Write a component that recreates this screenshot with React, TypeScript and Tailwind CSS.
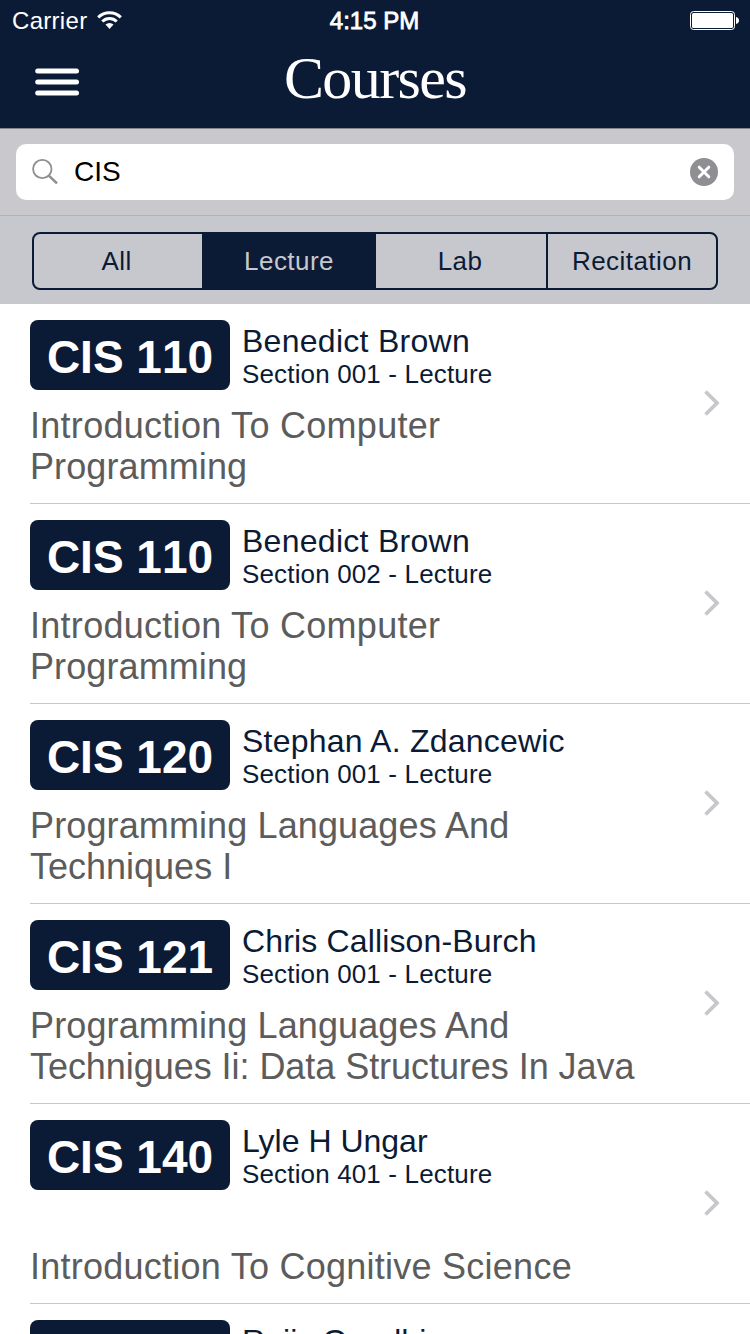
type Line = { text: string; tracking: string };
type Course = { code: string; instructor: string; nameTracking: string; section: string; title: Line[] };

const introLines: Line[] = [
  { text: "Introduction To Computer", tracking: "tracking-[0.28px]" },
  { text: "Programming", tracking: "tracking-[0.1px]" },
];

const courses: Course[] = [
  { code: "CIS 110", instructor: "Benedict Brown", nameTracking: "tracking-[0.28px]", section: "Section 001 - Lecture", title: introLines },
  { code: "CIS 110", instructor: "Benedict Brown", nameTracking: "tracking-[0.28px]", section: "Section 002 - Lecture", title: introLines },
  {
    code: "CIS 120",
    instructor: "Stephan A. Zdancewic",
    nameTracking: "tracking-[0.22px]",
    section: "Section 001 - Lecture",
    title: [
      { text: "Programming Languages And", tracking: "tracking-[0.12px]" },
      { text: "Techniques I", tracking: "tracking-[0px]" },
    ],
  },
  {
    code: "CIS 121",
    instructor: "Chris Callison-Burch",
    nameTracking: "tracking-[0.15px]",
    section: "Section 001 - Lecture",
    title: [
      { text: "Programming Languages And", tracking: "tracking-[0.12px]" },
      { text: "Technigues Ii: Data Structures In Java", tracking: "tracking-[-0.05px]" },
    ],
  },
  {
    code: "CIS 140",
    instructor: "Lyle H Ungar",
    nameTracking: "tracking-[0px]",
    section: "Section 401 - Lecture",
    title: [{ text: "Introduction To Cognitive Science", tracking: "tracking-[0.25px]" }],
  },
  {
    code: "CIS 160",
    instructor: "Rajiv Gandhi",
    nameTracking: "tracking-[0.1px]",
    section: "Section 001 - Lecture",
    title: [{ text: "Mathematical Foundations", tracking: "tracking-[0px]" }],
  },
];

function StatusBar() {
  return (
    <div className="grid h-10 grid-cols-3 items-center pl-3 pr-[11px] text-[24px] leading-[42px]">
      <div className="flex items-center gap-[10px]">
        <span className="h-10 tracking-[0.3px]">Carrier</span>
        <svg width="25" height="18" viewBox="0 0 25 18" fill="none" stroke="white" strokeWidth="3">
          <path d="M1.2 6.4A16 16 0 0 1 23.8 6.4" />
          <path d="M5.3 10.5A10.2 10.2 0 0 1 19.7 10.5" />
          <path d="M12.5 17.9L8.5 13.6A5.7 5.7 0 0 1 16.5 13.6Z" fill="white" stroke="none" />
        </svg>
      </div>
      <span className="h-10 pr-0.5 text-center [-webkit-text-stroke:0.8px_white]">4:15 PM</span>
      <svg className="justify-self-end" width="49" height="19" viewBox="0 0 49 19">
        <rect x="0.5" y="0.5" width="44" height="18" rx="3" fill="none" stroke="white" />
        <rect x="2" y="2" width="41" height="15" rx="1.5" fill="white" />
        <path d="M46 6C48 6.5 49 7.8 49 9.5S48 12.5 46 13Z" fill="white" />
      </svg>
    </div>
  );
}

function NavBar() {
  return (
    <div className="grid h-[88px] grid-cols-[80px_1fr_80px]">
      <svg className="ml-[35px] mt-7" width="44" height="28" viewBox="0 0 44 28" fill="white">
        <rect x="0.2" y="0.4" width="43.8" height="5.1" rx="2.5" />
        <rect x="0.2" y="11.4" width="43.8" height="5.1" rx="2.5" />
        <rect x="0.2" y="22.4" width="43.8" height="5.1" rx="2.5" />
      </svg>
      <h1 className="text-center font-['Liberation_Serif',serif] text-[60px] leading-[77px] tracking-[-1.6px]">Courses</h1>
    </div>
  );
}

function SearchBar() {
  return (
    <div className="h-[88px] border-y border-t-[#85868b] border-b-[#b2b2b6] bg-[#c9c8cd] px-4 pt-[15px]">
      <div className="flex h-14 items-center rounded-[10px] bg-white px-4">
        <svg width="27" height="28" viewBox="0 0 27 28" fill="none" stroke="#8e8e93">
          <circle cx="10.3" cy="11" r="9.2" strokeWidth="1.8" />
          <path d="M16.8 17.6L25 25.4" strokeWidth="2.6" />
        </svg>
        <span className="h-14 flex-1 pl-[15px] text-[28px] leading-[55px] text-black">CIS</span>
        <svg width="28" height="28" viewBox="0 0 28 28">
          <circle cx="14" cy="14" r="14" fill="#8e8e93" />
          <path d="M9.2 9.2L18.8 18.8M18.8 9.2L9.2 18.8" stroke="white" strokeWidth="3" strokeLinecap="round" />
        </svg>
      </div>
    </div>
  );
}

function Scopes() {
  return (
    <div className="h-[88px] bg-[#c7c8cd] px-8 pt-4">
      <div className="grid h-[58px] w-[686px] grid-cols-[168px_174px_170px_170px] overflow-hidden rounded-lg border-2 border-[#0b1b35] text-center text-[26px] leading-[54px] tracking-[0.45px] text-[#0b1b35]">
        <span className="pr-[3px]">All</span>
        <span className="bg-[#0b1b35] text-[#c7c8cd]">Lecture</span>
        <span className="pr-0.5">Lab</span>
        <span className="border-l-2 border-[#0b1b35]">Recitation</span>
      </div>
    </div>
  );
}

function CourseRow({ course }: { course: Course }) {
  return (
    <li className="ml-[30px] flex h-[200px] items-center border-b border-[#c8c7cc]">
      <div className="flex h-full w-[640px] flex-col justify-between py-4">
        <div className="flex gap-3">
          <div className="h-[70px] w-[200px] rounded-lg bg-[#0b1b35] text-center text-[46px] font-bold leading-[74px] text-white [font-kerning:none]">
            {course.code}
          </div>
          <div className="whitespace-nowrap pt-[3px] text-[#0b1b35]">
            <div className={`text-[32px] leading-9 ${course.nameTracking}`}>{course.instructor}</div>
            <div className="text-[26px] leading-[30px] tracking-[0.15px]">{course.section}</div>
          </div>
        </div>
        <div className="whitespace-nowrap text-[36px] leading-[41px] text-[#5c5c5c]">
          {course.title.map((line) => (
            <div key={line.text} className={line.tracking}>
              {line.text}
            </div>
          ))}
        </div>
      </div>
      <svg className="mb-[2px] ml-[34px]" width="17" height="28" viewBox="0 0 17 28" fill="none">
        <path d="M1.5 2.5L13 14L1.5 25.5" stroke="#c7c7cc" strokeWidth="3.8" />
      </svg>
    </li>
  );
}

export default function App() {
  return (
    <div className="h-[1334px] w-[750px] overflow-hidden bg-white font-['Liberation_Sans',Arial,sans-serif]">
      <header className="bg-[#0b1b35] text-white">
        <StatusBar />
        <NavBar />
      </header>
      <SearchBar />
      <Scopes />
      <ul>
        {courses.map((course, i) => (
          <CourseRow key={i} course={course} />
        ))}
      </ul>
    </div>
  );
}
